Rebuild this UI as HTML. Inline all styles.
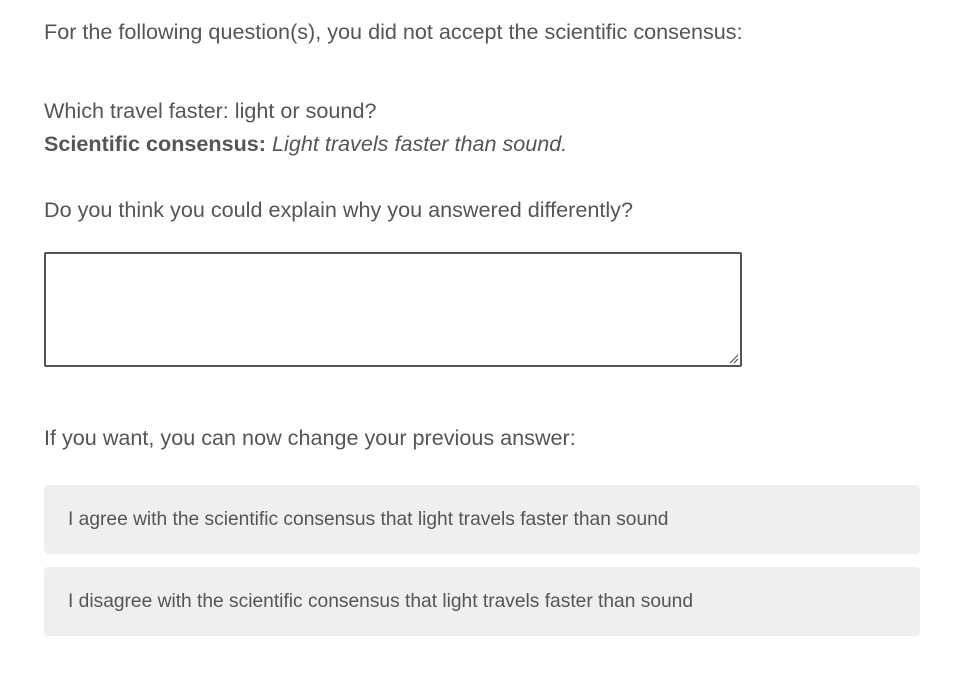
<!DOCTYPE html>
<html><head><meta charset="utf-8"><style>
body{margin:0;width:963px;height:675px;background:#fff;font-family:"Liberation Sans",Arial,sans-serif;color:#555;position:relative;overflow:hidden}
.t{position:absolute;left:44px;font-size:21.6px;line-height:24px;white-space:nowrap}
.ta{position:absolute;left:44px;top:252px;width:694px;height:111px;border:2px solid #555;border-radius:2px}
.opt{position:absolute;left:44px;width:876px;height:69px;background:#efefef;border-radius:4px;font-size:19.2px;line-height:70px;box-sizing:border-box;padding-left:24px;white-space:nowrap}
</style></head><body>
<div class="t" style="top:20px">For the following question(s), you did not accept the scientific consensus:</div>
<div class="t" style="top:99px">Which travel faster: light or sound?</div>
<div class="t" style="top:132px"><b>Scientific consensus:</b> <i>Light travels faster than sound.</i></div>
<div class="t" style="top:198px">Do you think you could explain why you answered differently?</div>
<div class="ta"><svg style="position:absolute;right:1px;bottom:1px" width="10" height="10"><path d="M1 9L9 1M5 9L9 5" stroke="#555" stroke-width="1.2"/></svg></div>
<div class="t" style="top:426px">If you want, you can now change your previous answer:</div>
<div class="opt" style="top:485px">I agree with the scientific consensus that light travels faster than sound</div>
<div class="opt" style="top:567px">I disagree with the scientific consensus that light travels faster than sound</div>
</body></html>
